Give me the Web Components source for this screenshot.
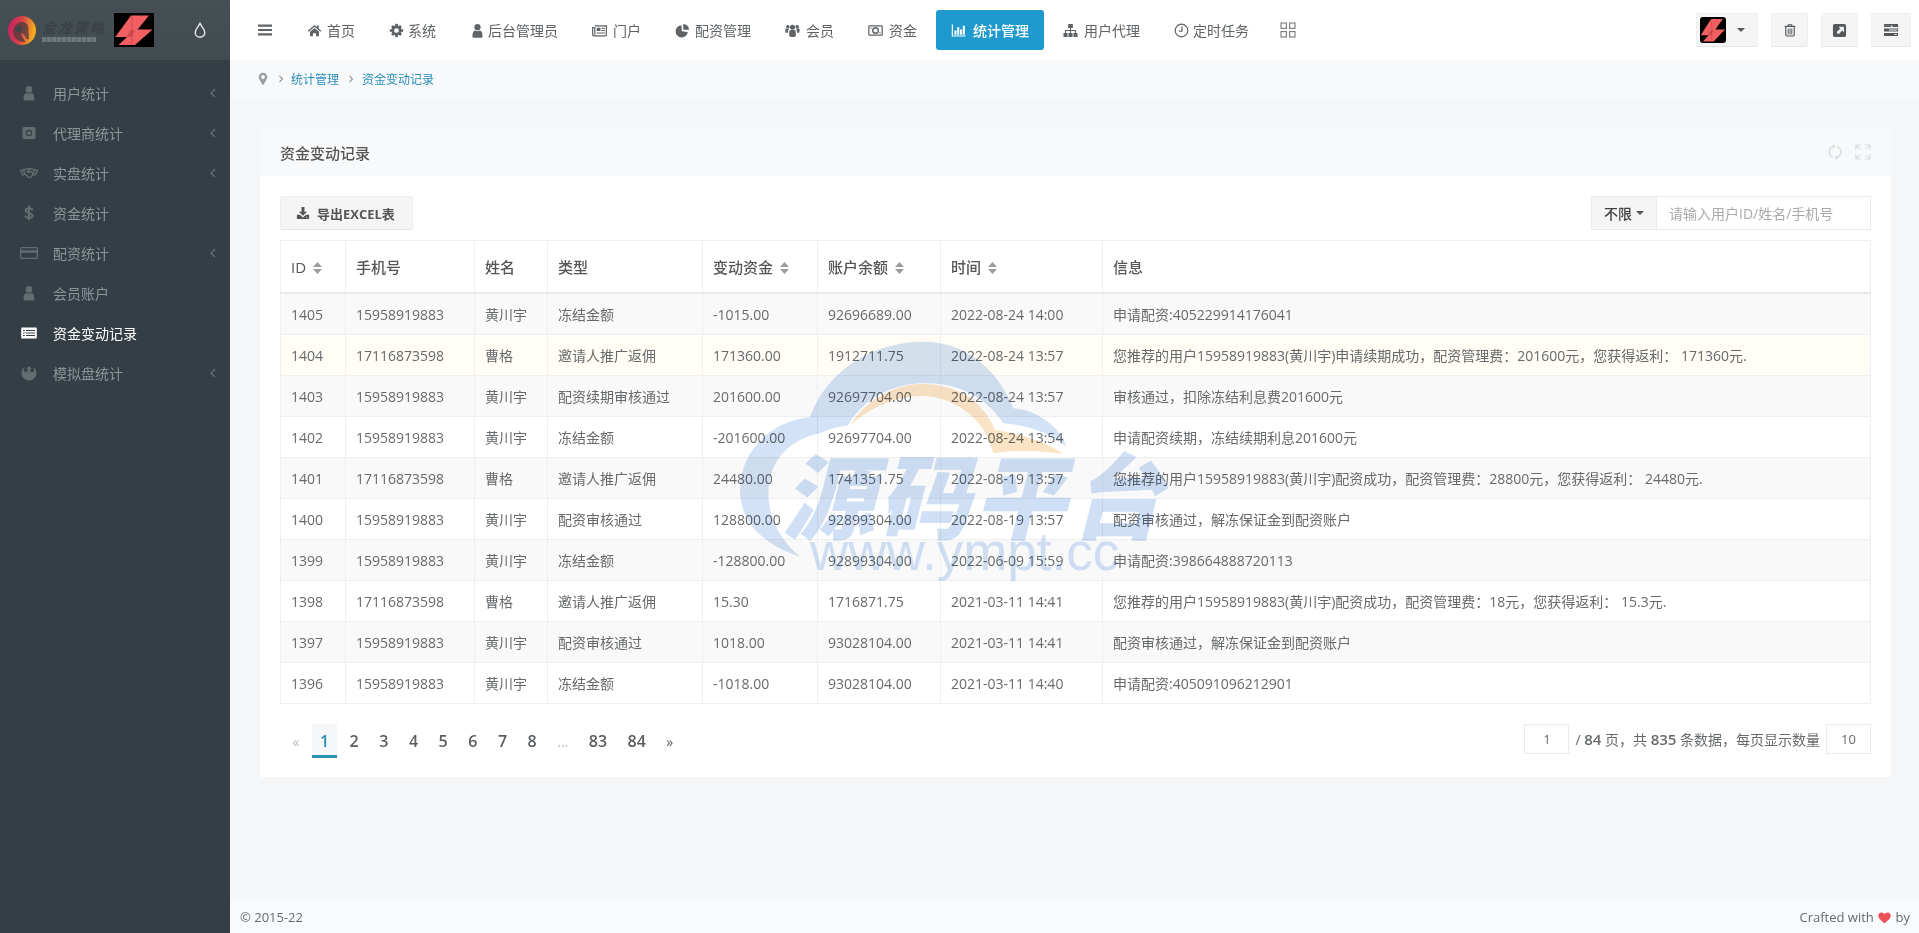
<!DOCTYPE html>
<html lang="zh">
<head>
<meta charset="utf-8">
<title>资金变动记录</title>
<style>
  html, body { margin: 0; height: 100%; }
  body {
    display: flex;
    width: 1919px;
    height: 933px;
    overflow: hidden;
    position: relative;
    font: 14px "Open Sans", "Noto Sans CJK SC", sans-serif;
    color: #676a6c;
    background: #f4f6f8;
  }
  main { display: flex; flex-direction: column; flex: 1; min-width: 0; }
</style>
</head>
<body>
<app-sidebar>
  <side-item icon="user" arrow>用户统计</side-item>
  <side-item icon="camera" arrow>代理商统计</side-item>
  <side-item icon="handshake" arrow>实盘统计</side-item>
  <side-item icon="dollar">资金统计</side-item>
  <side-item icon="card" arrow>配资统计</side-item>
  <side-item icon="user">会员账户</side-item>
  <side-item icon="listalt" active>资金变动记录</side-item>
  <side-item icon="rebel" arrow>模拟盘统计</side-item>
</app-sidebar>
<main>
  <top-nav>
    <nav-item icon="home" gap="20">首页</nav-item>
    <nav-item icon="cog" gap="19">系统</nav-item>
    <nav-item icon="user" gap="18">后台管理员</nav-item>
    <nav-item icon="news" gap="21">门户</nav-item>
    <nav-item icon="pie" gap="20">配资管理</nav-item>
    <nav-item icon="users" gap="21">会员</nav-item>
    <nav-item icon="money" gap="21">资金</nav-item>
    <nav-item icon="bars" gap="22" active>统计管理</nav-item>
    <nav-item icon="sitemap" gap="21">用户代理</nav-item>
    <nav-item icon="clock" gap="19">定时任务</nav-item>
  </top-nav>
  <bread-crumb>
    <a>统计管理</a>
    <a>资金变动记录</a>
  </bread-crumb>
  <page-body>
    <data-panel title="资金变动记录">
      <ledger-table></ledger-table>
      <pager-bar></pager-bar>
    </data-panel>
  </page-body>
  <app-footer></app-footer>
</main>
<water-mark></water-mark>

<script>
'use strict'

const ICONS = {
  menu: '<path d="M1 2.5h14v2.2H1zM1 6.9h14v2.2H1zM1 11.3h14v2.2H1z"/>',
  home: '<path d="M8 2 .8 8.2l1 1.1L8 4l6.2 5.3 1-1.1-2.7-2.3V2.6h-2v1.6z"/><path d="M3.2 9.4V14h3.2v-3.2h3.2V14h3.2V9.4L8 5.2z"/>',
  cog: '<circle cx="8" cy="8" r="3.9" fill="none" stroke="currentColor" stroke-width="2.8"/><g id="t"><rect x="6.6" y=".9" width="2.8" height="2.6"/><rect x="6.6" y="12.5" width="2.8" height="2.6"/><rect x=".9" y="6.6" width="2.6" height="2.8"/><rect x="12.5" y="6.6" width="2.6" height="2.8"/></g><g transform="rotate(45 8 8)"><rect x="6.6" y="1.2" width="2.8" height="2.6"/><rect x="6.6" y="12.2" width="2.8" height="2.6"/><rect x="1.2" y="6.6" width="2.6" height="2.8"/><rect x="12.2" y="6.6" width="2.6" height="2.8"/></g>',
  user: '<circle cx="8" cy="4.4" r="3.3"/><path d="M2.6 14c0-3.6 1-5.6 2.8-6 1.4 1.1 3.8 1.1 5.2 0 1.8.4 2.8 2.4 2.8 6 0 1-.7 1.6-1.6 1.6H4.200c-.9 0-1.600-.6-1.600-1.600z"/>',
  news: '<path fill="none" stroke="currentColor" stroke-width="1.300" d="M3 3h12.300v9.800a.9.900 0 0 1-.9.900H1.500a.8.800 0 0 1-.8-.8V5h2.300v7.500"/><path d="M5 5h4v3.500H5zM10 5h3.800v1H10zM10 7.500h3.800v1H10zM5 10h8.800v1.200H5z"/>',
  pie: '<path d="M7 2.400A6.500 6.500 0 1 0 13.600 9.500L7.200 8.800z"/><path d="M8.800 1A6.300 6.300 0 0 1 15 7.200L8.800 7.300z"/>',
  users: '<circle cx="8" cy="4.600" r="2.700"/><circle cx="3" cy="3.900" r="1.900"/><circle cx="13" cy="3.900" r="1.900"/><path d="M4.500 9.500c0-1.200 1-2 2-2h3c1 0 2 .8 2 2V13c0 1.200-1 1.800-2 1.800h-3c-1 0-2-.6-2-1.800z"/><path d="M.3 7.500c0-1 .8-1.700 1.700-1.700h1.500l.7 1c-.8.500-1 1.300-1 2.200v1.500H1.500C.8 10.500.3 10 .3 9.300zM15.700 7.500c0-1-.8-1.700-1.700-1.700h-1.500l-.7 1c.8.500 1 1.300 1 2.200v1.500h1.400c.7 0 1.200-.5 1.200-1.200z"/>',
  money: '<rect x=".9" y="3" width="14.200" height="10" rx=".8" fill="none" stroke="currentColor" stroke-width="1.300"/><circle cx="8" cy="8" r="3" fill="none" stroke="currentColor" stroke-width="1.500"/><path d="M2.600 5h1.400v1.200H2.600zM12 9.800h1.400V11H12z"/>',
  bars: '<path d="M.8 1.500h1.300v11.700h13.400v1.300H.8z"/><path d="M3.600 8h2.200v4.400H3.600zM6.600 4.500h2.200v7.900H6.600zM9.600 7h2.200v5.400H9.600zM12.600 3h2.200v9.400h-2.200z"/>',
  sitemap: '<path d="M5.500 1h5v4.200h-5zM.5 10.600h4.400v4.400H.5zM5.800 10.600h4.400v4.400H5.800zM11.100 10.600h4.400v4.400h-4.400z"/><path fill="none" stroke="currentColor" stroke-width="1.200" d="M8 5v6M2.700 11V8h10.600v3"/>',
  clock: '<circle cx="8" cy="8" r="6.700" fill="none" stroke="currentColor" stroke-width="1.300"/><path fill="none" stroke="currentColor" stroke-width="1.300" d="M8.500 3.600v5h-3"/>',
  grid: '<g fill="none" stroke="currentColor" stroke-width="1.100"><rect x="1" y="1" width="5.400" height="5.400"/><rect x="9.600" y="1" width="5.400" height="5.400"/><rect x="1" y="9.600" width="5.400" height="5.400"/><rect x="9.600" y="9.600" width="5.400" height="5.400"/></g>',
  trash: '<path d="M5.800 1.500h4.400l.8 1.700h3v1.300H2V3.200h3zM6.900 2.700l-.3.500h2.800l-.3-.5z"/><path fill="none" stroke="currentColor" stroke-width="1.300" d="M3.200 4.500v9.300c0 .7.400 1 1 1h7.600c.6 0 1-.3 1-1V4.500"/><path d="M5.400 6.200h1.100v7H5.400zM7.450 6.200h1.100v7h-1.100zM9.500 6.200h1.100v7H9.500z"/>',
  extlink: '<path fill-rule="evenodd" d="M3 1h10a2 2 0 0 1 2 2v10a2 2 0 0 1-2 2H3a2 2 0 0 1-2-2V3a2 2 0 0 1 2-2zm4 3 1.800 1.800-4 4L7 12l4-4 1.800 1.800V4z"/>',
  tasks: '<path d="M1 2h14v3H9.500v-1.200H1zM1 6.500h14v3H1zM6 7.600v1h8v-1zM1 11h14v3H1zM11 12.200v.8h3v-.8z"/><path d="M1 3.800h7v1.200H1z"/>',
  camera: '<path fill-rule="evenodd" d="M3 2h10a1.500 1.500 0 0 1 1.500 1.500v9A1.500 1.500 0 0 1 13 14H3a1.500 1.500 0 0 1-1.500-1.500v-9A1.500 1.500 0 0 1 3 2zm5 2.700A3.300 3.300 0 1 0 8 11.300 3.300 3.300 0 0 0 8 4.700zm0 1.200a2.100 2.100 0 1 1 0 4.200 2.100 2.100 0 0 1 0-4.200z"/>',
  handshake: '<g fill="none" stroke="currentColor" stroke-width="1.300"><path d="M.3 5.400 3 4.600l1.300 4.600-1.700 1zM15.700 5.400 13 4.600l-1.300 4.600 1.700 1z"/><path d="M3 5.200 7.200 3.600c1-.3 2-.3 2.800 0l3 1.400M4.300 8.800l3.400 3.400c.7.600 1.500.4 2-.1l2-2.900"/><path d="M9.500 3.800 6.800 6.200c-.5.600 0 1.400 1 1.300l2-1.200 2 2.500"/></g>',
  dollar: '<path fill="none" stroke="currentColor" stroke-width="2" d="M11.500 5.300C11.300 3.700 9.800 3.200 8 3.200c-2 0-3.400 1-3.400 2.400C4.600 8.500 11.500 7.500 11.500 10.500c0 1.500-1.500 2.400-3.500 2.400-1.800 0-3.400-.6-3.700-2.300M8 .8v14.400"/>',
  card: '<path fill-rule="evenodd" d="M1.500 2h13A1.500 1.500 0 0 1 16 3.500v9a1.500 1.500 0 0 1-1.500 1.500h-13A1.500 1.500 0 0 1 0 12.500v-9A1.500 1.500 0 0 1 1.500 2zm0 1.200a.3.300 0 0 0-.3.300v1.800h13.600V3.500a.3.300 0 0 0-.3-.3zm-.3 4.500v4.800c0 .2.100.3.300.3h13c.2 0 .3-.1.300-.3V7.700z"/>',
  listalt: '<path fill-rule="evenodd" d="M1.200 2.400h13.600c.6 0 1 .4 1 1v9.200c0 .6-.4 1-1 1H1.200c-.6 0-1-.4-1-1V3.400c0-.6.4-1 1-1zM2 5v1h1.800V5zm3 0v1h9V5zM2 7.500v1h1.800v-1zm3 0v1h9v-1zM2 10v1h1.800v-1zm3 0v1h9v-1z"/>',
  rebel: '<path d="M4.200 1.500C1.800 3 .5 5.300.5 8a7.500 7.500 0 0 0 15 0c0-2.700-1.300-5-3.700-6.500 1 1.300 1.500 2.700 1.200 3.900-.4 1.300-1.500 2-2.600 1.700-.9-.3-1.300-1-1.100-2 .1-.8.600-1.300 1.200-1.500L8 1 5.500 3.600c.6.200 1.100.7 1.200 1.500.2 1-.2 1.700-1.100 2-1.100.3-2.200-.4-2.600-1.700-.3-1.200.2-2.600 1.200-3.900z"/>',
  tint: '<path fill="none" stroke="currentColor" stroke-width="1.400" d="M8 1.400C6.600 4.500 3.200 7.500 3.200 10.400a4.800 4.800 0 0 0 9.600 0C12.800 7.500 9.400 4.500 8 1.400z"/>',
  pin: '<path fill-rule="evenodd" d="M8 .8A4.800 4.800 0 0 0 3.200 5.600C3.200 8.600 6.600 12.500 8 15.200c1.400-2.700 4.800-6.600 4.800-9.600A4.800 4.800 0 0 0 8 .8zm0 2.700a2.200 2.200 0 1 1 0 4.400 2.200 2.200 0 0 1 0-4.400z"/>',
  download: '<path d="M6.300 1h3.400v5.500h3L8 11.200 3.300 6.500h3z"/><path d="M1 10h3.500L8 13l3.500-3H15v4.800H1zM11.800 12.300v1h1v-1z"/>',
  refresh: '<g fill="none" stroke="currentColor" stroke-width="1.500"><path d="M6 2.400A5.900 5.900 0 0 0 6 13.400"/><path d="M10 2.600A5.900 5.900 0 0 1 10 13.600"/></g><path d="M5.800 0v4.800l2.600-2.500zM10.200 16v-4.800l-2.600 2.500z"/>',
  expand: '<g fill="none" stroke="currentColor" stroke-width="1.200"><path d="M1 6V1h5M1 1l4.200 4.200M15 6V1h-5M15 1l-4.200 4.200M1 10v5h5M1 15l4.200-4.200M15 10v5h-5M15 15l-4.200-4.200"/></g>'
}

class FaIcon extends HTMLElement {
  constructor () {
    super()
    let shadowRoot = this.attachShadow({ mode: 'open' })
    let size = this.getAttribute('size') || 14
    let name = this.getAttribute('name')
    shadowRoot.innerHTML = `
    <style>
      :host { display: inline-flex; align-items: center; justify-content: center; flex: none; }
      svg { display: block; fill: currentColor; }
    </style>
    <svg width="${size}" height="${this.getAttribute('height') || size}" viewBox="0 0 16 16" preserveAspectRatio="none">${ICONS[name]}</svg>
    `
  }
}
customElements.define('fa-icon', FaIcon)

// the red folded "S" badge, used for the logo and the avatar
const BADGE = `
  <rect width="40" height="34" fill="#000"/>
  <path d="M17 2.600H35L17.500 24H1.200z" fill="#f35f60"/>
  <path d="M21 16.500H38.500L21 32H4.500z" fill="#f35f60"/>
  <path d="M18 2.600V32" stroke="#b53d3f" stroke-width=".6" fill="none"/>
  <path d="M16 17.500 21 16.500 17.500 24 12 24z" fill="#000" opacity=".15"/>`

class AppSidebar extends HTMLElement {
  constructor () {
    super()
    let shadowRoot = this.attachShadow({ mode: 'open' })
    shadowRoot.innerHTML = `
    <style>
      :host { display: flex; flex-direction: column; width: 230px; flex: none; background: #343e44; }
      #head {
        height: 60px;
        display: flex;
        align-items: center;
        padding-left: 8px;
        background: linear-gradient(#464f54, #424b50);
        box-sizing: border-box;
      }
      #ring {
        width: 28px;
        height: 29px;
        border-radius: 50%;
        background: linear-gradient(100deg, #c41f66 0%, #d8414a 45%, #f4a81f 85%);
        position: relative;
        flex: none;
      }
      #ring svg { position: absolute; inset: 0; }
      #brand { margin-left: 6px; width: 72px; flex: none; }
      #brand b {
        display: block;
        font: italic 700 14px/16px "Noto Sans CJK SC", sans-serif;
        letter-spacing: 2px;
        color: #3a4247;
        white-space: nowrap;
      }
      #brand i {
        display: block;
        height: 5px;
        width: 54px;
        margin-top: 2px;
        background: repeating-linear-gradient(90deg, #6d767b 0 4px, #565f64 4px 5px);
      }
      #badge { display: block; flex: none; }
      fa-icon { margin-left: 38px; color: #e6e8e9; }
      #list { padding-top: 13px; display: flex; flex-direction: column; }
    </style>
    <div id="head">
      <div id="ring">
        <svg width="28" height="29" viewBox="0 0 28 29"><path d="M10 7c4-2 9-1 10 3 1 3 0 8 1 13-2 1-3 0-4-3-1-2-3-3-4-2l2 4c1 2 3 3 2 4-4 0-9-2-11-6-2-5 0-11 4-13z" fill="#4a3a3c" opacity=".75"/><circle cx="11" cy="13" r="3" fill="#3f4649"/></svg>
      </div>
      <div id="brand"><b>金龙策略</b><i></i></div>
      <svg id="badge" width="40" height="34" viewBox="0 0 40 34">${BADGE}</svg>
      <fa-icon name="tint" size="16"></fa-icon>
    </div>
    <div id="list"><slot></slot></div>
    `
  }
}
customElements.define('app-sidebar', AppSidebar)

class SideItem extends HTMLElement {
  constructor () {
    super()
    let shadowRoot = this.attachShadow({ mode: 'open' })
    let wide = ['handshake', 'card'].includes(this.getAttribute('icon'))
    shadowRoot.innerHTML = `
    <style>
      :host {
        display: flex;
        align-items: center;
        height: 40px;
        padding-left: 20px;
        color: #8b959a;
        font-size: 14px;
      }
      :host([active]) { color: #fff; }
      .ic { width: 18px; display: flex; justify-content: center; color: #626c71; margin-right: 15px; }
      :host([active]) .ic { color: #fff; }
      svg { margin-left: auto; margin-right: 13px; }
      span { white-space: nowrap; }
    </style>
    <div class="ic"><fa-icon name="${this.getAttribute('icon')}" size="${wide ? 18 : 16}" height="${wide ? 16 : 16}"></fa-icon></div>
    <span><slot></slot></span>
    ${this.hasAttribute('arrow') ? '<svg width="8" height="10" viewBox="0 0 8 10"><path d="M6 1 2.200 5 6 9" fill="none" stroke="#626c71" stroke-width="1.500"/></svg>' : ''}
    `
  }
}
customElements.define('side-item', SideItem)

class TopNav extends HTMLElement {
  constructor () {
    super()
    let shadowRoot = this.attachShadow({ mode: 'open' })
    shadowRoot.innerHTML = `
    <style>
      :host {
        display: flex;
        align-items: center;
        height: 60px;
        flex: none;
        background: #fff;
        padding-left: 27px;
        padding-right: 8px;
        color: #5f6366;
      }
      #menu { margin-right: 19px; }
      #items { display: flex; gap: 4px; align-items: center; }
      #grid { margin-left: 16px; color: #777; }
      #tools { margin-left: auto; display: flex; gap: 13px; align-items: center; }
      .btn {
        display: flex;
        align-items: center;
        justify-content: center;
        height: 34px;
        box-sizing: border-box;
        width: 37px;
        background: #f5f5f5;
        border: 1px solid #efefef;
        border-bottom-color: #e6e6e6;
        border-radius: 2px;
        color: #54585b;
      }
      #who { width: 62px; justify-content: flex-start; padding-left: 3px; }
      #who svg { border-radius: 3px; display: block; }
      #who i {
        margin-left: 11px;
        border: 4px solid transparent;
        border-top-color: #54585b;
        border-bottom: 0;
      }
    </style>
    <fa-icon id="menu" name="menu" size="16"></fa-icon>
    <div id="items"><slot></slot></div>
    <fa-icon id="grid" name="grid" size="16"></fa-icon>
    <div id="tools">
      <div class="btn" id="who">
        <svg width="26" height="26" viewBox="0 0 40 34" preserveAspectRatio="none">${BADGE}</svg>
        <i></i>
      </div>
      <div class="btn"><fa-icon name="trash" size="14"></fa-icon></div>
      <div class="btn"><fa-icon name="extlink" size="15"></fa-icon></div>
      <div class="btn" style="width:40px"><fa-icon name="tasks" size="16"></fa-icon></div>
    </div>
    `
  }
}
customElements.define('top-nav', TopNav)

class NavItem extends HTMLElement {
  constructor () {
    super()
    let shadowRoot = this.attachShadow({ mode: 'open' })
    shadowRoot.innerHTML = `
    <style>
      :host {
        display: flex;
        align-items: center;
        height: 40px;
        padding: 0 15px;
        color: #5f6366;
        border-radius: 3px;
        white-space: nowrap;
      }
      :host([active]) { background: #1f9ace; color: #fff; font-weight: 500; }
      .ic { width: ${this.getAttribute('gap')}px; flex: none; }
      .ic fa-icon { display: flex; width: 15px; }
    </style>
    <div class="ic"><fa-icon name="${this.getAttribute('icon')}" size="15"></fa-icon></div>
    <slot></slot>
    `
  }
}
customElements.define('nav-item', NavItem)

class BreadCrumb extends HTMLElement {
  constructor () {
    super()
    let shadowRoot = this.attachShadow({ mode: 'open' })
    shadowRoot.innerHTML = `
    <style>
      :host {
        display: flex;
        align-items: center;
        height: 38px;
        flex: none;
        padding-left: 26px;
        background: #f8f9fa;
        font-size: 12px;
        color: #2a8ebc;
      }
      fa-icon { color: #9a9ea1; }
      .sep { margin: 0 7px 0 8px; }
      .sep:last-of-type { margin: 0 8px 0 9px; }
      a { color: #2a8ebc; white-space: nowrap; }
      svg { display: block; }
    </style>
    <fa-icon name="pin" size="14"></fa-icon>
    <svg class="sep" width="6" height="8" viewBox="0 0 6 8"><path d="M1.500 1 4.500 4 1.500 7" fill="none" stroke="#999" stroke-width="1.100"/></svg>
    <a>${this.children[0].textContent}</a>
    <svg class="sep" width="6" height="8" viewBox="0 0 6 8"><path d="M1.500 1 4.500 4 1.500 7" fill="none" stroke="#999" stroke-width="1.100"/></svg>
    <a>${this.children[1].textContent}</a>
    `
  }
}
customElements.define('bread-crumb', BreadCrumb)

class PageBody extends HTMLElement {
  constructor () {
    super()
    let shadowRoot = this.attachShadow({ mode: 'open' })
    shadowRoot.innerHTML = `
    <style>
      :host {
        display: block;
        flex: 1;
        padding: 30px 28px 0 30px;
        background: #f4f6f8;
      }
    </style>
    <slot></slot>
    `
  }
}
customElements.define('page-body', PageBody)

class DataPanel extends HTMLElement {
  constructor () {
    super()
    let shadowRoot = this.attachShadow({ mode: 'open' })
    shadowRoot.innerHTML = `
    <style>
      :host { display: block; background: #fff; }
      header {
        display: flex;
        align-items: center;
        height: 48px;
        padding: 0 20px;
        background: #f8f9fa;
        font-size: 15px;
        font-weight: 500;
        color: #555;
      }
      #acts { margin-left: auto; display: flex; gap: 12px; color: #d9dbdc; }
      #body { padding: 20px 20px 19px; }
      #bar { display: flex; justify-content: space-between; margin-bottom: 10px; }
      #export {
        display: flex;
        align-items: center;
        gap: 7px;
        height: 34px;
        width: 133px;
        box-sizing: border-box;
        padding-left: 15px;
        background: #f5f5f5;
        border: 1px solid #eee;
        border-bottom-color: #e5e5e5;
        border-radius: 2px;
        font-size: 13px;
        font-weight: 700;
        color: #555;
        white-space: nowrap;
      }
      #search { display: flex; height: 34px; width: 280px; box-sizing: border-box; border: 1px solid #eaeaea; }
      #limit {
        display: flex;
        align-items: center;
        width: 65px;
        box-sizing: border-box;
        padding-left: 12px;
        background: #f5f5f5;
        border-right: 1px solid #eaeaea;
        color: #444;
        font-weight: 500;
      }
      #limit i {
        margin-left: 4px;
        border: 4px solid transparent;
        border-top-color: #555;
        border-bottom: 0;
      }
      input {
        flex: 1;
        min-width: 0;
        border: 0;
        outline: 0;
        padding: 0 0 0 12px;
        font: 14px "Open Sans", "Noto Sans CJK SC", sans-serif;
        color: #555;
      }
      input::placeholder { color: #aaa; opacity: 1; }
    </style>
    <header>
      <span>${this.getAttribute('title')}</span>
      <div id="acts">
        <fa-icon name="refresh" size="16"></fa-icon>
        <fa-icon name="expand" size="16"></fa-icon>
      </div>
    </header>
    <div id="body">
      <div id="bar">
        <div id="export"><fa-icon name="download" size="14"></fa-icon>导出EXCEL表</div>
        <div id="search">
          <div id="limit">不限<i></i></div>
          <input placeholder="请输入用户ID/姓名/手机号">
        </div>
      </div>
      <slot></slot>
    </div>
    `
  }
}
customElements.define('data-panel', DataPanel)

const HUANG = ['15958919883', '黄川宇']
const CAO = ['17116873598', '曹格']
const RECORDS = [
  [1405, HUANG, '冻结金额', '-1015.00', '92696689.00', '2022-08-24 14:00', '申请配资:405229914176041'],
  [1404, CAO, '邀请人推广返佣', '171360.00', '1912711.75', '2022-08-24 13:57', '您推荐的用户15958919883(黄川宇)申请续期成功，配资管理费：201600元，您获得返利： 171360元.'],
  [1403, HUANG, '配资续期审核通过', '201600.00', '92697704.00', '2022-08-24 13:57', '审核通过，扣除冻结利息费201600元'],
  [1402, HUANG, '冻结金额', '-201600.00', '92697704.00', '2022-08-24 13:54', '申请配资续期，冻结续期利息201600元'],
  [1401, CAO, '邀请人推广返佣', '24480.00', '1741351.75', '2022-08-19 13:57', '您推荐的用户15958919883(黄川宇)配资成功，配资管理费：28800元，您获得返利： 24480元.'],
  [1400, HUANG, '配资审核通过', '128800.00', '92899304.00', '2022-08-19 13:57', '配资审核通过，解冻保证金到配资账户'],
  [1399, HUANG, '冻结金额', '-128800.00', '92899304.00', '2022-06-09 15:59', '申请配资:398664888720113'],
  [1398, CAO, '邀请人推广返佣', '15.30', '1716871.75', '2021-03-11 14:41', '您推荐的用户15958919883(黄川宇)配资成功，配资管理费：18元，您获得返利： 15.3元.'],
  [1397, HUANG, '配资审核通过', '1018.00', '93028104.00', '2021-03-11 14:41', '配资审核通过，解冻保证金到配资账户'],
  [1396, HUANG, '冻结金额', '-1018.00', '93028104.00', '2021-03-11 14:40', '申请配资:405091096212901']
]

const SORT = '<svg class="sort" width="9" height="12" viewBox="0 0 9 12"><path d="M4.500 0 9 5H0zM4.500 12 0 7h9z"/></svg>'

class LedgerTable extends HTMLElement {
  constructor () {
    super()
    let shadowRoot = this.attachShadow({ mode: 'open' })
    let rows = RECORDS.map((r, i) => `
      <tr class="${i === 1 ? 'hover' : i % 2 === 0 ? 'odd' : ''}">
        <td>${r[0]}</td><td>${r[1][0]}</td><td>${r[1][1]}</td><td>${r[2]}</td>
        <td>${r[3]}</td><td>${r[4]}</td><td>${r[5]}</td><td>${r[6]}</td>
      </tr>`).join('')
    shadowRoot.innerHTML = `
    <style>
      :host { display: block; }
      table { width: 100%; table-layout: fixed; border-collapse: collapse; color: #676a6c; }
      th, td { border: 1px solid #eeeff0; padding: 0 10px; text-align: left; white-space: nowrap; overflow: hidden; }
      th { height: 51px; font-size: 15px; font-weight: 500; color: #555; border-bottom: 2px solid #e7e9ea; }
      td { height: 40px; font-size: 14px; }
      tr.odd td { background: #f9f9f9; }
      tr.hover td { background: #fffdf5; }
      .sort { fill: #9c9c9c; margin-left: 7px; vertical-align: -1px; }
    </style>
    <table>
      <colgroup>
        <col style="width:65px"><col style="width:129px"><col style="width:73px"><col style="width:155px">
        <col style="width:115px"><col style="width:123px"><col style="width:162px"><col>
      </colgroup>
      <thead><tr>
        <th>ID${SORT}</th><th>手机号</th><th>姓名</th><th>类型</th>
        <th>变动资金${SORT}</th><th>账户余额${SORT}</th><th>时间${SORT}</th><th>信息</th>
      </tr></thead>
      <tbody>${rows}</tbody>
    </table>
    `
  }
}
customElements.define('ledger-table', LedgerTable)

class PagerBar extends HTMLElement {
  constructor () {
    super()
    let shadowRoot = this.attachShadow({ mode: 'open' })
    let pages = ['2', '3', '4', '5', '6', '7', '8'].map(p => `<a>${p}</a>`).join('')
    shadowRoot.innerHTML = `
    <style>
      :host { display: flex; justify-content: space-between; margin-top: 20px; height: 34px; }
      #pages { display: flex; gap: 5.500px; padding-left: 5px; align-items: flex-start; }
      a {
        display: flex;
        align-items: center;
        justify-content: center;
        height: 34px;
        padding: 0 7.500px;
        box-sizing: border-box;
        font-size: 16px;
        font-weight: 600;
        color: #5a5d5f;
      }
      a.cur { color: #2b90b3; background: #f6f7f8; border-bottom: 3px solid #2b90b3; padding-top: 3px; }
      a.off { color: #bbb; font-weight: 400; font-size: 14px; }
      a.next { font-weight: 400; font-size: 14px; }
      #info { display: flex; align-items: flex-start; gap: 6px; font-size: 14px; color: #676a6c; white-space: nowrap; }
      #info span { line-height: 30px; }
      #info b { font-size: 15px; font-weight: 600; }
      .box {
        width: 45px;
        height: 30px;
        box-sizing: border-box;
        border: 1px solid #eaeaea;
        display: flex;
        align-items: center;
        justify-content: center;
        font-size: 13px;
      }
    </style>
    <div id="pages">
      <a class="off">«</a><a class="cur">1</a>${pages}<a class="off">...</a><a>83</a><a>84</a><a class="next">»</a>
    </div>
    <div id="info">
      <div class="box">1</div>
      <span>/ <b>84</b> 页，共 <b>835</b> 条数据，每页显示数量</span>
      <div class="box">10</div>
    </div>
    `
  }
}
customElements.define('pager-bar', PagerBar)

class AppFooter extends HTMLElement {
  constructor () {
    super()
    let shadowRoot = this.attachShadow({ mode: 'open' })
    shadowRoot.innerHTML = `
    <style>
      :host {
        display: flex;
        justify-content: space-between;
        align-items: center;
        height: 33px;
        flex: none;
        padding: 0 9px 0 10px;
        background: #f9fafb;
        font-size: 13px;
        color: #676a6c;
      }
      svg { vertical-align: -2px; margin: 0 1px; }
    </style>
    <span>© 2015-22</span>
    <span>Crafted with <svg width="13" height="12" viewBox="0 0 13 12"><path d="M6.500 11.500C3 8.500.3 6.500.3 3.600.3 1.700 1.700.4 3.400.4c1.300 0 2.400.7 3.100 1.900C7.200 1.100 8.300.4 9.600.4c1.700 0 3.100 1.300 3.100 3.200 0 2.900-2.700 4.900-6.200 7.900z" fill="#ef5158"/></svg> by</span>
    `
  }
}
customElements.define('app-footer', AppFooter)

// site stamp lying over the table, multiplied so the row text stays readable
class WaterMark extends HTMLElement {
  constructor () {
    super()
    let shadowRoot = this.attachShadow({ mode: 'open' })
    shadowRoot.innerHTML = `
    <style>
      :host {
        position: absolute;
        left: 720px;
        top: 330px;
        width: 470px;
        height: 260px;
        mix-blend-mode: multiply;
        pointer-events: none;
      }
      svg { position: absolute; inset: 0; }
      #cn {
        position: absolute;
        left: 62px;
        top: 106px;
        font: italic 900 92px/112px "Noto Sans CJK SC", sans-serif;
        letter-spacing: 4px;
        color: #cfe0f6;
        white-space: nowrap;
      }
      #en {
        position: absolute;
        left: 90px;
        top: 191px;
        font: 53px/62px "Liberation Sans", sans-serif;
        color: #d3e3f7;
        white-space: nowrap;
      }
    </style>
    <svg width="470" height="260" viewBox="0 0 1410 780">
      <path fill="#d3e2f6" d="M240 680C120 640 60 570 60 480 60 360 160 270 270 262 320 120 460 35 610 35 730 35 830 110 880 235 950 240 1020 290 1040 350 990 310 930 285 850 280 790 190 700 155 600 160 500 165 420 220 385 285 360 290 330 295 300 310 200 330 145 400 145 490 145 570 190 640 240 680Z"/>
      <path fill="#fbe4c6" d="M390 285C440 210 520 165 600 162 700 158 790 210 825 300 900 310 980 335 1030 372 950 360 880 360 820 370 800 270 700 195 600 198 520 200 450 235 390 285Z"/>
    </svg>
    <div id="cn">源码平台</div>
    <div id="en">www.ympt.cc</div>
    `
  }
}
customElements.define('water-mark', WaterMark)
</script>
</body>
</html>
